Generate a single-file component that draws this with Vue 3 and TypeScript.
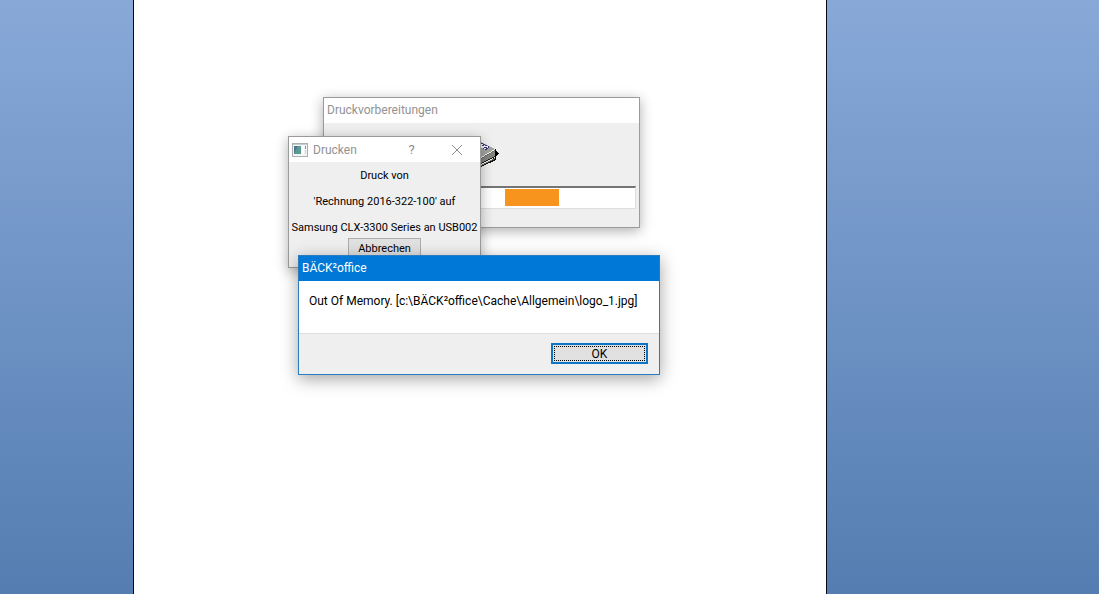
<script setup lang="ts">
const progress = { start: 57.6, width: 17.8 }
const jobLines: string[] = [
  'Druck von',
  "'Rechnung 2016-322-100' auf",
  'Samsung CLX-3300 Series an USB002',
]
const message = 'Out Of Memory. [c:\\BÄCK²office\\Cache\\Allgemein\\logo_1.jpg]'
</script>

<template>
  <main class="desktop">
    <div class="sheet"></div>

    <section class="window prepare" aria-labelledby="prepare-title">
      <header id="prepare-title" class="titlebar">Druckvorbereitungen</header>
      <div class="prepare-body">
        <svg class="printer" width="35" height="32" viewBox="0 0 35 32" shape-rendering="crispEdges" aria-hidden="true">
          <path d="M31 11 35 14 31 18Z" fill="#000" />
          <path d="M1 21 16 27 32 18V21L17 28 1 23Z" fill="#111" />
          <path d="M1 12 17 3 31 10 17 18Z" fill="#a4a4a0" />
          <path d="M1 13 17 19 31 11V17L17 24 1 20Z" fill="#85857e" />
          <path d="M17 19 31 11V12L17 20 1 14V13Z" fill="#6c6c68" />
          <path d="M1 20 17 24 31 17V18L17 25 1 21Z" fill="#222" />
          <path d="M17 26 31 19V20L17 27Z" fill="#77776f" />
          <path d="M31 10H32V20H31Z" fill="#000" />
          <path d="M13 7 18 4 26 8 22 11Z" fill="#3a3a70" />
          <path d="M14 7 18 5 25 8 21 10Z" fill="#f4f4ff" />
          <path d="M18 6H20V7H18ZM20 8H23V9H20Z" fill="#353579" />
        </svg>
        <div class="track" role="progressbar" aria-label="Druckvorbereitungen">
          <div class="chunk" :style="{ marginLeft: progress.start + '%', width: progress.width + '%' }"></div>
        </div>
      </div>
    </section>

    <section class="window job" aria-labelledby="job-title">
      <header class="titlebar job-titlebar">
        <svg width="16" height="14" viewBox="0 0 16 14" aria-hidden="true">
          <rect x=".5" y=".5" width="15" height="13" fill="#f4f4f4" stroke="#a9b0b3" />
          <rect x="1" y="1" width="14" height="1" fill="#c8ced0" />
          <rect x="2" y="3" width="7" height="8" fill="#5b9c91" />
          <path d="M2 3H6L2 11Z" fill="#50778b" />
          <path d="M10 3h2v8h-2z" fill="#fff" />
          <path d="M13 3h1v3h-1z" fill="#70a090" />
          <path d="M13 7h1v4h-1z" fill="#d0d4d4" />
        </svg>
        <span id="job-title" class="job-name">Drucken</span>
        <button type="button" class="caption" aria-label="Hilfe">?</button>
        <button type="button" class="caption" aria-label="Schließen">
          <svg width="12" height="12" viewBox="0 0 12 12" aria-hidden="true">
            <path d="M1 1 11 11M11 1 1 11" stroke="#8c8c8c" fill="none" />
          </svg>
        </button>
      </header>
      <div class="job-body">
        <p v-for="line in jobLines" :key="line">{{ line }}</p>
        <button type="button" class="cancel">Abbrechen</button>
      </div>
    </section>

    <section class="window alert" role="alertdialog" aria-labelledby="alert-title" aria-describedby="alert-text">
      <header id="alert-title" class="titlebar alert-titlebar">BÄCK²office</header>
      <p id="alert-text" class="alert-text">{{ message }}</p>
      <footer class="alert-footer">
        <button type="button" class="ok"><span class="focus-ring">OK</span></button>
      </footer>
    </section>
  </main>
</template>

<style>
body {
  margin: 0;
}
</style>

<style scoped>
.desktop {
  position: relative;
  box-sizing: border-box;
  min-height: 100vh;
  padding: 0 272px 0 133px;
  display: flex;
  overflow: hidden;
  background: linear-gradient(#88a9d8, #557db1);
  font-family: Roboto, "Open Sans", sans-serif;
  font-size: 12px;
  color: #000;
}
.sheet {
  flex: 1;
  background: #fff;
  border: solid #050a14;
  border-width: 0 1px;
}
.window {
  position: absolute;
  box-sizing: border-box;
  border: 1px solid #9b9b9b;
  background: #efefef;
  box-shadow: 0 3px 12px rgba(0, 0, 0, 0.32);
}
.titlebar {
  height: 25px;
  line-height: 24px;
  padding: 0 3px;
  background: #fff;
  color: #929292;
}
.prepare {
  left: 323px;
  top: 97px;
  width: 317px;
}
.prepare-body {
  padding: 16px 3px 18px;
}
.printer {
  display: block;
  margin: 0 auto 15px;
}
.track {
  height: 17px;
  padding: 1px 0 2px;
  background: #fff;
  border: solid #dedede;
  border-width: 2px 1px 1px;
  border-top-color: #747474;
}
.chunk {
  height: 17px;
  background: #f7941d;
}
.job {
  left: 288px;
  top: 136px;
  width: 193px;
}
.job-titlebar {
  display: flex;
  align-items: center;
  padding-right: 1px;
}
.job-name {
  flex: 1;
  padding-left: 5px;
}
.caption {
  width: 45px;
  height: 24px;
  padding: 0;
  border: 0;
  background: none;
  color: #8c8c8c;
  display: flex;
  align-items: center;
  justify-content: center;
  font-family: inherit;
  font-size: 13px;
}
.job-body {
  display: flex;
  flex-direction: column;
  align-items: center;
  padding: 1px 0 8px;
  font-size: 11px;
}
.job-body p {
  margin: 0;
  line-height: 26px;
  white-space: nowrap;
}
.cancel {
  width: 73px;
  height: 21px;
  margin-top: -3px;
  padding: 0;
  border: 1px solid #adadad;
  background: #e1e1e1;
  color: #000;
  font-family: inherit;
  font-size: 11px;
}
.alert {
  left: 298px;
  top: 255px;
  width: 362px;
  border-color: #2a7cc2;
  box-shadow: 0 4px 16px rgba(0, 0, 0, 0.36);
}
.alert-titlebar {
  background: #0078d7;
  color: #fff;
}
.alert-text {
  margin: 0;
  padding: 10px 10px 22px;
  line-height: 20px;
  background: #fff;
  border-bottom: 1px solid #dfdfdf;
  white-space: nowrap;
}
.alert-footer {
  display: flex;
  justify-content: flex-end;
  padding: 9px 11px 10px;
}
.ok {
  width: 97px;
  height: 21px;
  padding: 1px;
  border: 2px solid #0f75c6;
  background: #e1e1e1;
  color: #000;
  display: flex;
  font-family: inherit;
  font-size: 12px;
}
.focus-ring {
  flex: 1;
  border: 1px dotted #000;
  line-height: 14px;
}
</style>
